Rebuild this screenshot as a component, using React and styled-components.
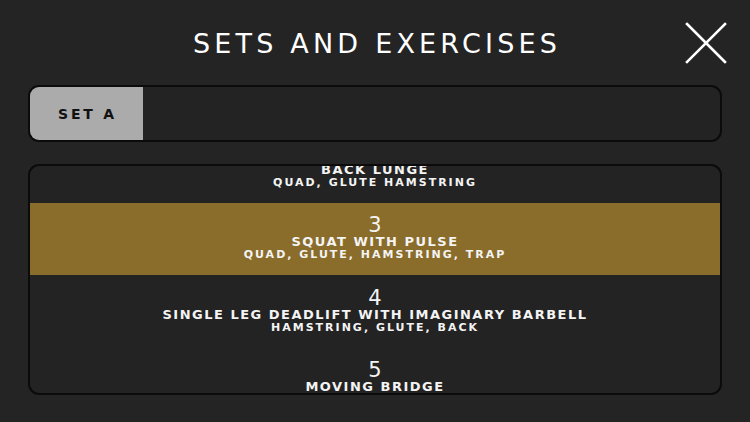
import React from "react";
import styled, { createGlobalStyle } from "styled-components";

const GlobalStyle = createGlobalStyle`
  html, body {
    margin: 0;
    padding: 0;
    background: #242424;
  }
  body {
    font-family: "DejaVu Sans", "Liberation Sans", sans-serif;
    color: #ffffff;
  }
  * { box-sizing: border-box; }
`;

const Screen = styled.div`
  width: 750px;
  height: 422px;
  background: #242424;
  display: flex;
  flex-direction: column;
  padding: 0 28px 27px;
  overflow: hidden;
`;

const Header = styled.header`
  height: 85px;
  display: grid;
  grid-template-columns: 1fr auto 1fr;
  align-items: center;
`;

const Title = styled.h1`
  grid-column: 2;
  margin: 0 0 0 4px;
  font-size: 27px;
  font-weight: normal;
  letter-spacing: 4.2px;
  color: #ffffff;
  line-height: 1;
  padding-top: 1px;
`;

const CloseButton = styled.button`
  grid-column: 3;
  justify-self: end;
  margin-right: -5px;
  width: 42px;
  height: 42px;
  padding: 0;
  border: none;
  background: transparent;
  display: flex;
  align-items: center;
  justify-content: center;
  cursor: pointer;
`;

const SetBar = styled.div`
  height: 57px;
  border: 2px solid #0b0b0b;
  border-radius: 11px;
  overflow: hidden;
  display: flex;
  background: #232323;
`;

const SetTab = styled.div`
  width: 113px;
  background: ${(p) => (p.$active ? "#ababab" : "transparent")};
  color: #111111;
  display: flex;
  align-items: center;
  justify-content: center;
  font-size: 14px;
  font-weight: bold;
  letter-spacing: 2.8px;
  padding-left: 2px;
`;

const ListPanel = styled.div`
  margin-top: 22px;
  flex: 1;
  border: 2px solid #0b0b0b;
  border-radius: 11px;
  overflow: hidden;
  background: #232323;
`;

/* the list is scrolled so that exercise 3 sits in the highlighted slot */
const List = styled.ul`
  list-style: none;
  margin: -36px 0 0;
  padding: 0;
`;

const Row = styled.li`
  height: 72.5px;
  display: flex;
  flex-direction: column;
  align-items: center;
  justify-content: center;
  background: ${(p) => (p.$active ? "#8a6c2b" : "transparent")};
  color: #f4f4f4;
  padding-top: 0;
`;

const Number = styled.div`
  font-size: 21px;
  line-height: 19px;
  font-weight: normal;
`;

const Name = styled.div`
  font-size: 13px;
  line-height: 14px;
  font-weight: bold;
  letter-spacing: 1.5px;
`;

const Muscles = styled.div`
  font-size: 11px;
  line-height: 12px;
  font-weight: bold;
  letter-spacing: 2px;
`;

const exercises = [
  { n: 2, name: "BACK LUNGE", muscles: "QUAD, GLUTE HAMSTRING" },
  { n: 3, name: "SQUAT WITH PULSE", muscles: "QUAD, GLUTE, HAMSTRING, TRAP", active: true },
  { n: 4, name: "SINGLE LEG DEADLIFT WITH IMAGINARY BARBELL", muscles: "HAMSTRING, GLUTE, BACK" },
  { n: 5, name: "MOVING BRIDGE", muscles: "GLUTE, HAMSTRING" },
];

export default function App() {
  return (
    <>
      <GlobalStyle />
      <Screen>
        <Header>
          <Title>SETS AND EXERCISES</Title>
          <CloseButton aria-label="Close">
            <svg width="42" height="42" viewBox="0 0 42 42">
              <path d="M2 2 L40 40 M40 2 L2 40" stroke="#ffffff" strokeWidth="2.6" strokeLinecap="square" />
            </svg>
          </CloseButton>
        </Header>
        <SetBar>
          <SetTab $active>SET A</SetTab>
        </SetBar>
        <ListPanel>
          <List>
            {exercises.map((e) => (
              <Row key={e.n} $active={e.active}>
                <Number>{e.n}</Number>
                <Name>{e.name}</Name>
                <Muscles>{e.muscles}</Muscles>
              </Row>
            ))}
          </List>
        </ListPanel>
      </Screen>
    </>
  );
}
